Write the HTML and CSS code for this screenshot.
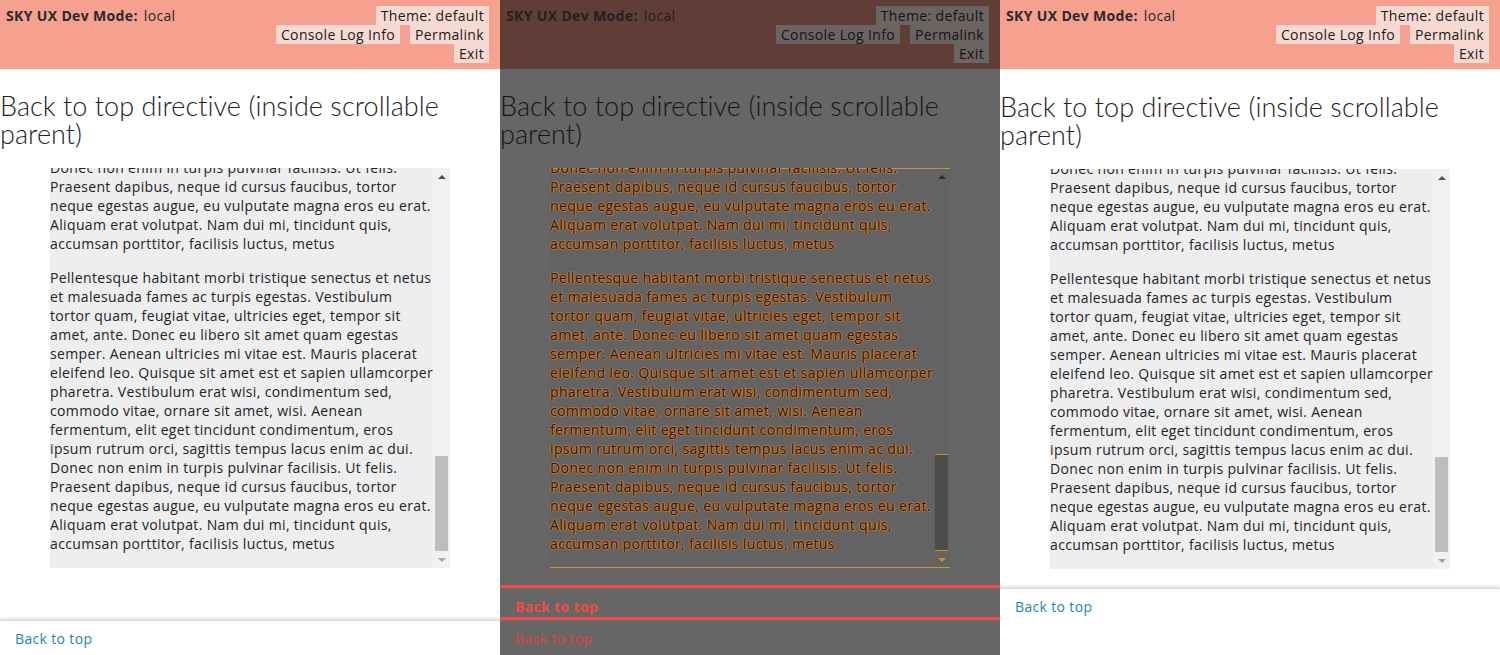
FILE: index.html
```html
<!DOCTYPE html>
<html lang="en">
<head>
<meta charset="utf-8">
<title>Back to top directive (inside scrollable parent)</title>
<link rel="stylesheet" href="styles.css">
</head>
<body>
<div class="screens">

  <section class="panel">
    <header class="devbar">
      <div class="devbar-title"><b>SKY UX Dev Mode:</b> local</div>
      <div class="devbar-actions">
        <div class="devbar-row"><button class="devbar-btn">Theme: default</button></div>
        <div class="devbar-row"><button class="devbar-btn">Console Log Info</button><button class="devbar-btn">Permalink</button></div>
        <div class="devbar-row"><button class="devbar-btn">Exit</button></div>
      </div>
    </header>
    <main class="content">
      <h1 class="title">Back to top directive (inside scrollable<br>parent)</h1>
      <div class="scrollbox">
        <div class="scroll-viewport">
          <div class="scroll-inner">
            <p>Pellentesque habitant morbi tristique senectus et netus<br>et malesuada fames ac turpis egestas. Vestibulum<br>tortor quam, feugiat vitae, ultricies eget, tempor sit<br>amet, ante. Donec eu libero sit amet quam egestas<br>semper. Aenean ultricies mi vitae est. Mauris placerat<br>eleifend leo. Quisque sit amet est et sapien ullamcorper<br>pharetra. Vestibulum erat wisi, condimentum sed,<br>commodo vitae, ornare sit amet, wisi. Aenean<br>fermentum, elit eget tincidunt condimentum, eros<br>ipsum rutrum orci, sagittis tempus lacus enim ac dui.<br>Donec non enim in turpis pulvinar facilisis. Ut felis.<br>Praesent dapibus, neque id cursus faucibus, tortor<br>neque egestas augue, eu vulputate magna eros eu erat.<br>Aliquam erat volutpat. Nam dui mi, tincidunt quis,<br>accumsan porttitor, facilisis luctus, metus</p>
            <p>Pellentesque habitant morbi tristique senectus et netus<br>et malesuada fames ac turpis egestas. Vestibulum<br>tortor quam, feugiat vitae, ultricies eget, tempor sit<br>amet, ante. Donec eu libero sit amet quam egestas<br>semper. Aenean ultricies mi vitae est. Mauris placerat<br>eleifend leo. Quisque sit amet est et sapien ullamcorper<br>pharetra. Vestibulum erat wisi, condimentum sed,<br>commodo vitae, ornare sit amet, wisi. Aenean<br>fermentum, elit eget tincidunt condimentum, eros<br>ipsum rutrum orci, sagittis tempus lacus enim ac dui.<br>Donec non enim in turpis pulvinar facilisis. Ut felis.<br>Praesent dapibus, neque id cursus faucibus, tortor<br>neque egestas augue, eu vulputate magna eros eu erat.<br>Aliquam erat volutpat. Nam dui mi, tincidunt quis,<br>accumsan porttitor, facilisis luctus, metus</p>
          </div>
        </div>
        <div class="scrollbar">
          <span class="sb-btn sb-up"></span>
          <span class="sb-track"><span class="sb-thumb"></span></span>
          <span class="sb-btn sb-down"></span>
        </div>
      </div>
    </main>
    <footer class="backtop backtop--bottom"><a class="backtop-link" href="#">Back to top</a></footer>
  </section>

  <section class="panel panel--diff">
    <header class="devbar">
      <div class="devbar-title"><b>SKY UX Dev Mode:</b> local</div>
      <div class="devbar-actions">
        <div class="devbar-row"><button class="devbar-btn">Theme: default</button></div>
        <div class="devbar-row"><button class="devbar-btn">Console Log Info</button><button class="devbar-btn">Permalink</button></div>
        <div class="devbar-row"><button class="devbar-btn">Exit</button></div>
      </div>
    </header>
    <main class="content">
      <h1 class="title">Back to top directive (inside scrollable<br>parent)</h1>
      <div class="scrollbox">
        <div class="scroll-viewport">
          <div class="scroll-inner">
            <p>Pellentesque habitant morbi tristique senectus et netus<br>et malesuada fames ac turpis egestas. Vestibulum<br>tortor quam, feugiat vitae, ultricies eget, tempor sit<br>amet, ante. Donec eu libero sit amet quam egestas<br>semper. Aenean ultricies mi vitae est. Mauris placerat<br>eleifend leo. Quisque sit amet est et sapien ullamcorper<br>pharetra. Vestibulum erat wisi, condimentum sed,<br>commodo vitae, ornare sit amet, wisi. Aenean<br>fermentum, elit eget tincidunt condimentum, eros<br>ipsum rutrum orci, sagittis tempus lacus enim ac dui.<br>Donec non enim in turpis pulvinar facilisis. Ut felis.<br>Praesent dapibus, neque id cursus faucibus, tortor<br>neque egestas augue, eu vulputate magna eros eu erat.<br>Aliquam erat volutpat. Nam dui mi, tincidunt quis,<br>accumsan porttitor, facilisis luctus, metus</p>
            <p>Pellentesque habitant morbi tristique senectus et netus<br>et malesuada fames ac turpis egestas. Vestibulum<br>tortor quam, feugiat vitae, ultricies eget, tempor sit<br>amet, ante. Donec eu libero sit amet quam egestas<br>semper. Aenean ultricies mi vitae est. Mauris placerat<br>eleifend leo. Quisque sit amet est et sapien ullamcorper<br>pharetra. Vestibulum erat wisi, condimentum sed,<br>commodo vitae, ornare sit amet, wisi. Aenean<br>fermentum, elit eget tincidunt condimentum, eros<br>ipsum rutrum orci, sagittis tempus lacus enim ac dui.<br>Donec non enim in turpis pulvinar facilisis. Ut felis.<br>Praesent dapibus, neque id cursus faucibus, tortor<br>neque egestas augue, eu vulputate magna eros eu erat.<br>Aliquam erat volutpat. Nam dui mi, tincidunt quis,<br>accumsan porttitor, facilisis luctus, metus</p>
          </div>
        </div>
        <div class="scrollbar">
          <span class="sb-btn sb-up"></span>
          <span class="sb-track"><span class="sb-thumb"></span></span>
          <span class="sb-btn sb-down"></span>
        </div>
      </div>
    </main>
    <div class="diff-bar"></div>
    <div class="diff-row diff-row--strong">Back to top</div>
    <div class="diff-bar diff-bar--tight"></div>
    <div class="diff-row">Back to top</div>
  </section>

  <section class="panel panel--current">
    <header class="devbar">
      <div class="devbar-title"><b>SKY UX Dev Mode:</b> local</div>
      <div class="devbar-actions">
        <div class="devbar-row"><button class="devbar-btn">Theme: default</button></div>
        <div class="devbar-row"><button class="devbar-btn">Console Log Info</button><button class="devbar-btn">Permalink</button></div>
        <div class="devbar-row"><button class="devbar-btn">Exit</button></div>
      </div>
    </header>
    <main class="content">
      <h1 class="title">Back to top directive (inside scrollable<br>parent)</h1>
      <div class="scrollbox">
        <div class="scroll-viewport">
          <div class="scroll-inner">
            <p>Pellentesque habitant morbi tristique senectus et netus<br>et malesuada fames ac turpis egestas. Vestibulum<br>tortor quam, feugiat vitae, ultricies eget, tempor sit<br>amet, ante. Donec eu libero sit amet quam egestas<br>semper. Aenean ultricies mi vitae est. Mauris placerat<br>eleifend leo. Quisque sit amet est et sapien ullamcorper<br>pharetra. Vestibulum erat wisi, condimentum sed,<br>commodo vitae, ornare sit amet, wisi. Aenean<br>fermentum, elit eget tincidunt condimentum, eros<br>ipsum rutrum orci, sagittis tempus lacus enim ac dui.<br>Donec non enim in turpis pulvinar facilisis. Ut felis.<br>Praesent dapibus, neque id cursus faucibus, tortor<br>neque egestas augue, eu vulputate magna eros eu erat.<br>Aliquam erat volutpat. Nam dui mi, tincidunt quis,<br>accumsan porttitor, facilisis luctus, metus</p>
            <p>Pellentesque habitant morbi tristique senectus et netus<br>et malesuada fames ac turpis egestas. Vestibulum<br>tortor quam, feugiat vitae, ultricies eget, tempor sit<br>amet, ante. Donec eu libero sit amet quam egestas<br>semper. Aenean ultricies mi vitae est. Mauris placerat<br>eleifend leo. Quisque sit amet est et sapien ullamcorper<br>pharetra. Vestibulum erat wisi, condimentum sed,<br>commodo vitae, ornare sit amet, wisi. Aenean<br>fermentum, elit eget tincidunt condimentum, eros<br>ipsum rutrum orci, sagittis tempus lacus enim ac dui.<br>Donec non enim in turpis pulvinar facilisis. Ut felis.<br>Praesent dapibus, neque id cursus faucibus, tortor<br>neque egestas augue, eu vulputate magna eros eu erat.<br>Aliquam erat volutpat. Nam dui mi, tincidunt quis,<br>accumsan porttitor, facilisis luctus, metus</p>
          </div>
        </div>
        <div class="scrollbar">
          <span class="sb-btn sb-up"></span>
          <span class="sb-track"><span class="sb-thumb"></span></span>
          <span class="sb-btn sb-down"></span>
        </div>
      </div>
    </main>
    <footer class="backtop backtop--inline"><a class="backtop-link" href="#">Back to top</a></footer>
  </section>

</div>
</body>
</html>
```

FILE: styles.css
```css
html, body {
  margin: 0;
  padding: 0;
  background: #ffffff;
}

.screens {
  display: flex;
  width: 1500px;
  height: 655px;
  overflow: hidden;
}

.panel {
  flex: 0 0 500px;
  width: 500px;
  height: 655px;
  overflow: hidden;
  display: flex;
  flex-direction: column;
  background: #ffffff;
  color: #212327;
  font-family: "Open Sans", "Lato", sans-serif;
  letter-spacing: 0.35px;
}

/* dev mode bar */
.devbar {
  flex: 0 0 auto;
  height: 69px;
  box-sizing: border-box;
  padding: 6px 11px 6px 6px;
  display: flex;
  justify-content: space-between;
  align-items: flex-start;
  background: #f6a08f;
  font-size: 14px;
  line-height: 19px;
  color: #282a2e;
}

.devbar-title b {
  font-weight: 700;
  margin-right: 2px;
}

.devbar-actions {
  display: flex;
  flex-direction: column;
  align-items: flex-end;
}

.devbar-row {
  display: flex;
  gap: 10px;
}

.devbar-btn {
  font: inherit;
  letter-spacing: inherit;
  height: 19px;
  line-height: 19px;
  border: 0;
  margin: 0;
  padding: 0 5px;
  background: #f9dad3;
  color: #1a1a1a;
}

/* content */
.content {
  padding-top: 23px;
}

.title {
  margin: 0 0 20px;
  font-family: "Lato", sans-serif;
  font-size: 27px;
  line-height: 28px;
  font-weight: 300;
  letter-spacing: 0.05px;
  color: #212327;
}

.scrollbox {
  margin-left: 50px;
  width: 400px;
  height: 400px;
  display: flex;
  background: #eeeeee;
}

.scroll-viewport {
  flex: 1 1 auto;
  min-width: 0;
  overflow: hidden;
  display: flex;
  flex-direction: column-reverse;
  font-size: 14px;
  line-height: 19px;
  white-space: nowrap;
}

.scroll-inner p {
  margin: 0 0 15px;
}

.scrollbar {
  flex: 0 0 17px;
  display: flex;
  flex-direction: column;
  background: #f1f1f1;
}

.sb-btn {
  flex: 0 0 17px;
  display: flex;
  align-items: center;
  justify-content: center;
}

.sb-up::before,
.sb-down::before {
  content: "";
  width: 0;
  height: 0;
  border-left: 4px solid transparent;
  border-right: 4px solid transparent;
}

.sb-up::before {
  border-bottom: 4px solid #505050;
}

.sb-down::before {
  border-top: 4px solid #a3a3a3;
}

.sb-track {
  flex: 1 1 auto;
  display: flex;
  flex-direction: column;
  justify-content: flex-end;
}

.sb-thumb {
  height: 95px;
  margin: 0 2px;
  background: #bdbdbd;
}

/* back to top */
.backtop {
  flex: 0 0 auto;
  box-sizing: border-box;
  padding: 8px 15px 6px;
  border-top: 1px solid #d6d7d9;
  box-shadow: 0 -2px 3px rgba(0, 0, 0, 0.12);
  background: #ffffff;
  font-size: 14px;
  line-height: 19px;
}

.backtop--bottom {
  margin-top: auto;
  height: 35px;
}

.backtop--inline {
  margin-top: 19px;
}

.backtop-link {
  color: #1f84b2;
  text-decoration: none;
}

.panel--current .content {
  padding-top: 24px;
}

/* diff panel */
.panel--diff {
  background: #666666;
}

.panel--diff .devbar {
  background: #613d38;
  color: #24201f;
}

.panel--diff .devbar-btn {
  background: #6b6462;
  color: #141414;
}

.panel--diff .title {
  color: #141518;
}

.panel--diff .scrollbox {
  background: #636363;
  box-shadow: inset 0 1px 0 #d68a32, inset 0 -1px 0 #d68a32;
}

.panel--diff .scroll-viewport {
  color: #1f1b19;
  text-shadow: 1px 0 0 #c4782f, -1px 0 0 #c4782f, 0 1px 0 #b86f2e, 0 -1px 0 #d0663a;
}

.panel--diff .scrollbar {
  background: transparent;
}

.panel--diff .sb-thumb {
  background: #4b4b4b;
  border-top: 1px solid #d68a32;
  border-bottom: 1px solid #d68a32;
}

.panel--diff .sb-up::before {
  border-bottom-color: #3a2a1e;
}

.panel--diff .sb-down::before {
  border-top-color: #d68a32;
}

.diff-bar {
  flex: 0 0 3px;
  margin-top: 17px;
  background: #f04a4a;
}

.diff-bar--tight {
  margin-top: 0;
}

.diff-row {
  flex: 0 0 29px;
  box-sizing: border-box;
  padding: 9px 15px 0;
  font-size: 14px;
  line-height: 19px;
  color: #e2404a;
}

.diff-row--strong {
  font-weight: 700;
  color: #f24a4a;
}
```
